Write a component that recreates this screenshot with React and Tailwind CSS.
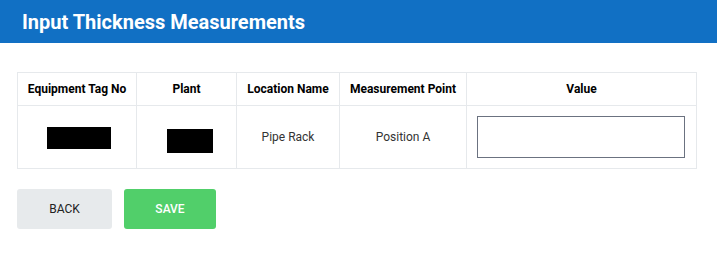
export default function App() {
    return (
        <div className="w-[717px] h-[257px] bg-white font-['Roboto',sans-serif] text-[12px]">
            <header className="h-[43px] bg-[#1170c4] flex items-center px-[22px]">
                <h1 className="text-white font-bold text-[20px]">Input Thickness Measurements</h1>
            </header>

            <section className="px-[17px] pt-[29px]">
                <table className="w-[680px] border-collapse table-fixed">
                    <colgroup>
                        <col className="w-[119px]" />
                        <col className="w-[100px]" />
                        <col className="w-[103px]" />
                        <col className="w-[127px]" />
                        <col className="w-[230px]" />
                    </colgroup>
                    <thead>
                        <tr className="h-[33px]">
                            <th className="border border-[#e6e9ec] font-bold text-black">Equipment Tag No</th>
                            <th className="border border-[#e6e9ec] font-bold text-black">Plant</th>
                            <th className="border border-[#e6e9ec] font-bold text-black">Location Name</th>
                            <th className="border border-[#e6e9ec] font-bold text-black">Measurement Point</th>
                            <th className="border border-[#e6e9ec] font-bold text-black">Value</th>
                        </tr>
                    </thead>
                    <tbody>
                        <tr className="h-[63px]">
                            <td className="border border-[#e6e9ec]">
                                <div className="w-[64px] h-[22px] bg-black ml-[29px] mt-[1px]" />
                            </td>
                            <td className="border border-[#e6e9ec]">
                                <div className="w-[46px] h-[24px] bg-black ml-[30px] mt-[7px]" />
                            </td>
                            <td className="border border-[#e6e9ec] text-center text-[#333]">Pipe Rack</td>
                            <td className="border border-[#e6e9ec] text-center text-[#333]">Position A</td>
                            <td className="border border-[#e6e9ec] px-[10px]">
                                <input type="text" className="block w-[208px] h-[42px] border border-[#6b7280] outline-none" />
                            </td>
                        </tr>
                    </tbody>
                </table>

                <div className="flex gap-[12px] mt-[20px]">
                    <button className="w-[95px] h-[40px] rounded-[3px] bg-[#e7eaec] text-[#222] text-[12px]">BACK</button>
                    <button className="w-[92px] h-[40px] rounded-[3px] bg-[#51cf6a] text-white font-medium text-[12px]">SAVE</button>
                </div>
            </section>
        </div>
    )
}
